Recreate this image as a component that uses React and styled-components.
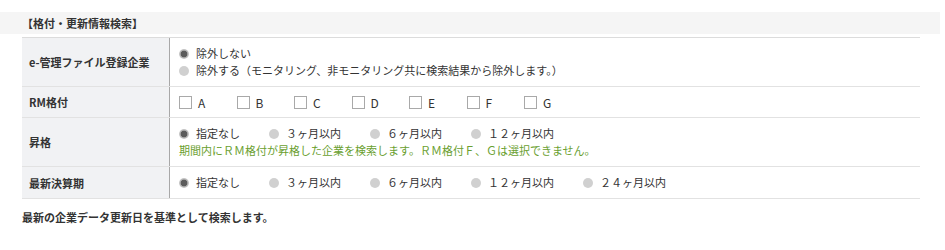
import React from "react";
import styled, { createGlobalStyle } from "styled-components";

const Global = createGlobalStyle`
  html, body { margin: 0; padding: 0; background: #fff; }
  body {
    font-family: "Noto Sans CJK JP", "Noto Sans", "Liberation Sans", sans-serif;
    font-size: 11px;
    color: #333;
  }
`;

const Page = styled.div`
  width: 940px;
  padding-top: 12px;
`;

const SectionTitle = styled.div`
  background: #f5f5f5;
  height: 22px;
  line-height: 22px;
  padding-left: 22px;
  font-weight: bold;
  font-size: 11px;
  color: #333;
`;

const Table = styled.div`
  margin: 3px 0 0 22px;
  width: 898px;
  border-top: 1px solid #dcdcdc;
`;

const Row = styled.div`
  display: grid;
  grid-template-columns: 148px 1fr;
  border-bottom: 1px solid #e2e2e2;
`;

const Label = styled.div`
  background: #f1f2f4;
  border-right: 1px solid #a8a8a8;
  display: flex;
  align-items: center;
  padding-left: 7px;
  font-weight: bold;
  font-size: 11px;
  color: #333;
`;

const Cell = styled.div`
  padding: ${(p) => (p.$tight ? "7px 9px 6px" : "7px 9px")};
  line-height: 17px;
`;

const Line = styled.div`
  display: flex;
  align-items: center;
  height: 17px;
`;

const RadioItem = styled.span`
  display: inline-flex;
  align-items: center;
  margin-right: 29px;
  white-space: nowrap;
`;

const RadioDot = styled.span`
  width: 10px;
  height: 10px;
  border-radius: 50%;
  margin-right: 7px;
  flex: none;
  background: ${(p) =>
    p.$checked
      ? "radial-gradient(circle, #5c5c5c 0 3px, #aaaaaa 3.6px, #d0d0d0 5px)"
      : "#d0d0d0"};
`;

const CheckItem = styled.span`
  display: inline-flex;
  align-items: center;
  width: 57.5px;
  flex: none;
  font-size: 12px;
`;

const Box = styled.span`
  width: 11px;
  height: 11px;
  border: 1px solid #a9a9a9;
  background: #fff;
  margin-right: 6px;
  flex: none;
`;

const Note = styled.div`
  color: #6aa02f;
  line-height: 17px;
`;

const Footer = styled.div`
  margin: 10px 0 0 22px;
  font-weight: bold;
  line-height: 17px;
`;

const Radio = ({ checked, children }) => (
  <RadioItem>
    <RadioDot $checked={checked} />
    {children}
  </RadioItem>
);

const periods = ["指定なし", "３ヶ月以内", "６ヶ月以内", "１２ヶ月以内"];

export default function App() {
  return (
    <>
      <Global />
      <Page>
        <SectionTitle>【格付・更新情報検索】</SectionTitle>
        <Table>
          <Row>
            <Label>e-管理ファイル登録企業</Label>
            <Cell>
              <Line>
                <Radio checked>除外しない</Radio>
              </Line>
              <Line>
                <Radio>除外する（モニタリング、非モニタリング共に検索結果から除外します。）</Radio>
              </Line>
            </Cell>
          </Row>
          <Row>
            <Label>RM格付</Label>
            <Cell $tight>
              <Line>
                {["A", "B", "C", "D", "E", "F", "G"].map((g) => (
                  <CheckItem key={g}>
                    <Box />
                    {g}
                  </CheckItem>
                ))}
              </Line>
            </Cell>
          </Row>
          <Row>
            <Label>昇格</Label>
            <Cell>
              <Line>
                {periods.map((p, i) => (
                  <Radio key={p} checked={i === 0}>
                    {p}
                  </Radio>
                ))}
              </Line>
              <Note>期間内にＲＭ格付が昇格した企業を検索します。ＲＭ格付Ｆ、Ｇは選択できません。</Note>
            </Cell>
          </Row>
          <Row>
            <Label>最新決算期</Label>
            <Cell>
              <Line>
                {[...periods, "２４ヶ月以内"].map((p, i) => (
                  <Radio key={p} checked={i === 0}>
                    {p}
                  </Radio>
                ))}
              </Line>
            </Cell>
          </Row>
        </Table>
        <Footer>最新の企業データ更新日を基準として検索します。</Footer>
      </Page>
    </>
  );
}
